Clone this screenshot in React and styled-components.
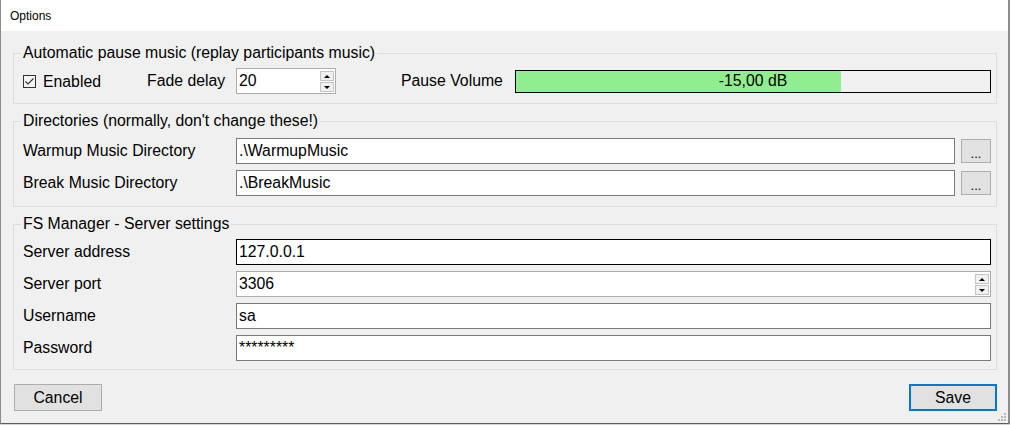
import React from 'react';
import styled, { createGlobalStyle } from 'styled-components';

const GlobalStyle = createGlobalStyle`
  html, body {
    margin: 0;
    padding: 0;
    background: #d4d4d4;
  }
  body {
    font-family: "Liberation Sans", Arial, sans-serif;
  }
  * {
    box-sizing: border-box;
  }
`;

const FONT = '15.8px';

const Window = styled.div`
  position: relative;
  width: 1010px;
  height: 424px;
  display: flex;
  flex-direction: column;
  background: #f0f0f0;
  border-left: 1px solid #8c8c8c;
  border-right: 2px solid #8c8c8c;
  border-bottom: 1px solid #5c5c5c;
  color: #000;
`;

const TitleBar = styled.div`
  flex: none;
  height: 31px;
  display: flex;
  align-items: center;
  padding-left: 9px;
  background: #fff;
  font-size: 12px;
`;

const Client = styled.div`
  flex: 1;
  display: flex;
  flex-direction: column;
  padding: 13px 11px 0 12px;
`;

const Group = styled.fieldset`
  min-width: 0;
  margin: ${p => p.$gap || 0}px 0 0 0;
  padding: ${p => p.$pt}px 5px ${p => p.$pb}px 9px;
  border: 1px solid #dcdcdc;
  display: flex;
  flex-direction: column;
  gap: 6px;
`;

const Legend = styled.legend`
  margin-left: -2px;
  padding: 0 2px;
  font-size: ${FONT};
  line-height: 18px;
`;

const Row = styled.div`
  height: 26px;
  display: flex;
  align-items: center;
  font-size: ${FONT};
`;

const Label = styled.span`
  flex: none;
  width: ${p => p.$w}px;
  margin-left: ${p => p.$ml || 0}px;
  white-space: nowrap;
`;

const CheckLabel = styled.label`
  flex: none;
  width: 124px;
  display: flex;
  align-items: center;
  gap: 7px;
  padding-top: 1px;
`;

const TextBox = styled.input`
  flex: 1;
  min-width: 0;
  height: 26px;
  margin: 0;
  padding: 0 2px;
  border: 1px solid ${p => (p.$focused ? '#000' : '#7a7a7a')};
  background: #fff;
  font-family: inherit;
  font-size: ${FONT};
  color: #000;
  outline: none;
`;

const NumBox = styled.div`
  flex: ${p => (p.$w ? 'none' : '1')};
  width: ${p => (p.$w ? `${p.$w}px` : 'auto')};
  height: 26px;
  display: flex;
  align-items: flex-start;
  border: 1px solid #adadad;
  background: #fff;
`;

const NumValue = styled.span`
  flex: 1;
  align-self: center;
  padding-left: 2px;
`;

const SpinCol = styled.div`
  flex: none;
  display: flex;
  flex-direction: column;
  gap: 1px;
  margin: 2px 1px 0 0;
`;

const SpinButton = styled.div`
  width: 14px;
  height: 10px;
  display: flex;
  align-items: center;
  justify-content: center;
  border: 1px solid #c4c4c4;
  background: #f0f0f0;

  &::after {
    content: '';
    border-left: 3px solid transparent;
    border-right: 3px solid transparent;
    ${p => (p.$down ? 'border-top: 3px solid #000;' : 'border-bottom: 3px solid #000;')}
  }
`;

const VolumeBar = styled.div`
  flex: 1;
  height: 23px;
  display: flex;
  align-items: center;
  justify-content: center;
  border: 1px solid #000;
  background: linear-gradient(to right, #90ee90 ${p => p.$level}%, #f0f0f0 ${p => p.$level}%);
  font-size: ${FONT};
`;

const BrowseButton = styled.button`
  flex: none;
  width: 30px;
  height: 24px;
  margin: 0 0 0 6px;
  padding: 0 0 2px;
  display: flex;
  align-items: flex-end;
  justify-content: center;
  border: 1px solid #adadad;
  background: #e1e1e1;
  font-family: inherit;
  font-size: 13px;
  line-height: 1;
  color: #000;
`;

const Footer = styled.div`
  display: flex;
  justify-content: space-between;
  margin-top: 14px;
  padding-left: 1px;
`;

const DialogButton = styled.button`
  width: 88px;
  height: 27px;
  margin: 0;
  padding: 0;
  border: ${p => (p.$default ? '2px solid #0078d7' : '1px solid #adadad')};
  background: #e1e1e1;
  font-family: inherit;
  font-size: ${FONT};
  color: #000;
`;

const Grip = styled.svg`
  position: absolute;
  right: 2px;
  bottom: 2px;
`;

const CheckBox = () => (
  <svg width="13" height="13" viewBox="0 0 13 13">
    <rect x="0.5" y="0.5" width="12" height="12" fill="#f4f4f4" stroke="#333" />
    <path d="M2.5 6.5 L5 9 L10.5 3.5" fill="none" stroke="#333" strokeWidth="1.1" />
  </svg>
);

const Spinner = () => (
  <SpinCol>
    <SpinButton />
    <SpinButton $down />
  </SpinCol>
);

export default function App() {
  return (
    <>
      <GlobalStyle />
      <Window>
        <TitleBar>Options</TitleBar>
        <Client>
          <Group $pt={6} $pb={9}>
            <Legend>Automatic pause music (replay participants music)</Legend>
            <Row>
              <CheckLabel>
                <CheckBox />
                Enabled
              </CheckLabel>
              <Label $w={89}>Fade delay</Label>
              <NumBox $w={100}>
                <NumValue>20</NumValue>
                <Spinner />
              </NumBox>
              <Label $w={114} $ml={65}>Pause Volume</Label>
              <VolumeBar $level={68.6}>-15,00 dB</VolumeBar>
            </Row>
          </Group>

          <Group $gap={8} $pt={8} $pb={10}>
            <Legend>Directories (normally, don't change these!)</Legend>
            <Row>
              <Label $w={213}>Warmup Music Directory</Label>
              <TextBox readOnly defaultValue=".\WarmupMusic" />
              <BrowseButton>...</BrowseButton>
            </Row>
            <Row>
              <Label $w={213}>Break Music Directory</Label>
              <TextBox readOnly defaultValue=".\BreakMusic" />
              <BrowseButton>...</BrowseButton>
            </Row>
          </Group>

          <Group $gap={8} $pt={6} $pb={8}>
            <Legend>FS Manager - Server settings</Legend>
            <Row>
              <Label $w={213}>Server address</Label>
              <TextBox readOnly $focused defaultValue="127.0.0.1" />
            </Row>
            <Row>
              <Label $w={213}>Server port</Label>
              <NumBox>
                <NumValue>3306</NumValue>
                <Spinner />
              </NumBox>
            </Row>
            <Row>
              <Label $w={213}>Username</Label>
              <TextBox readOnly defaultValue="sa" />
            </Row>
            <Row>
              <Label $w={213}>Password</Label>
              <TextBox readOnly defaultValue="*********" />
            </Row>
          </Group>

          <Footer>
            <DialogButton>Cancel</DialogButton>
            <DialogButton $default>Save</DialogButton>
          </Footer>
        </Client>
        <Grip width="8" height="8" viewBox="0 0 8 8">
          <g fill="#b8b8b8">
            <rect x="6" y="0" width="2" height="2" />
            <rect x="3" y="3" width="2" height="2" />
            <rect x="6" y="3" width="2" height="2" />
            <rect x="0" y="6" width="2" height="2" />
            <rect x="3" y="6" width="2" height="2" />
            <rect x="6" y="6" width="2" height="2" />
          </g>
        </Grip>
      </Window>
    </>
  );
}
